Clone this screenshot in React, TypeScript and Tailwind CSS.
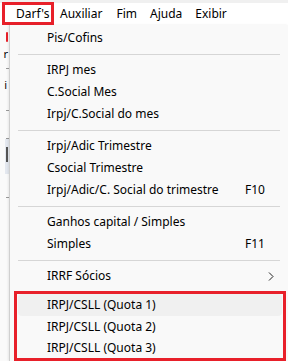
import React from 'react';

type Item = { label: string; key?: string; sub?: boolean };

const groups: Item[][] = [
  [{ label: 'Pis/Cofins' }],
  [{ label: 'IRPJ mes' }, { label: 'C.Social Mes' }, { label: 'Irpj/C.Social do mes' }],
  [
    { label: 'Irpj/Adic Trimestre' },
    { label: 'Csocial Trimestre' },
    { label: 'Irpj/Adic/C. Social do trimestre', key: 'F10' },
  ],
  [{ label: 'Ganhos capital / Simples' }, { label: 'Simples', key: 'F11' }],
];

const quotas = ['IRPJ/CSLL (Quota 1)', 'IRPJ/CSLL (Quota 2)', 'IRPJ/CSLL (Quota 3)'];

const Row = ({ item, h = 'h-[22px]' }: { item: Item; h?: string }) => (
  <div className={`flex ${h} items-center text-[12px] text-black`}>
    <span className="w-[198px]">{item.label}</span>
    <span className="w-[23px]">{item.key}</span>
    {item.sub && (
      <svg width="6" height="9" viewBox="0 0 6 9">
        <path d="M1 0.5 L5 4.5 L1 8.5" fill="none" stroke="#222" strokeWidth="1" />
      </svg>
    )}
  </div>
);

const Separator = () => (
  <div className="flex h-[10px] items-center px-[8px]">
    <div className="h-px w-full bg-[#d6d6d6]" />
  </div>
);

const App = () => {
  return (
    <div
      className="h-[361px] w-[288px] overflow-hidden bg-white"
      style={{ fontFamily: '"Noto Sans", "Open Sans", sans-serif' }}
    >
      {/* window strip + menu bar */}
      <div className="h-[3px] bg-[#f0f0f0]" />
      <div className="flex h-[22px] items-center text-[12px] text-black">
        <div className="-mt-px ml-[2px] flex h-[23px] w-[52px] items-center border-[3px] border-[#e8202a] pl-[11px]">
          Darf's
        </div>
        <span className="ml-[6px]">Auxiliar</span>
        <span className="ml-[14px]">Fim</span>
        <span className="ml-[13px]">Ajuda</span>
        <span className="ml-[13px]">Exibir</span>
      </div>

      <div className="flex h-[336px]">
        {/* bits of the window behind */}
        <div className="flex w-[9px] flex-col items-end bg-[#fafafa] pt-[7px] text-[11px] leading-none">
          <div className="mr-px h-[10px] w-[2px] rounded-sm bg-[#e8202a]" />
          <span className="mr-px mt-[6px]">r</span>
          <div className="mt-[9px] h-px w-[3px] bg-[#999]" />
          <span className="mr-[2px] mt-[10px]">i</span>
          <div className="mt-[20px] h-px w-[3px] bg-[#999]" />
          <div className="mt-[27px] h-px w-[3px] bg-[#999]" />
          <div className="flex h-[35px] w-[4px] items-start justify-center bg-[#e4e8ef] pt-[8px]">
            <div className="h-[15px] w-[2px] bg-[#555]" />
          </div>
          <div className="mt-[23px] h-px w-[3px] bg-[#999]" />
        </div>

        {/* dropdown */}
        <div className="flex-1 border-l border-[#d0d0d0] bg-[#f9f9f9] pt-[2px] shadow-[-1px_0_2px_rgba(0,0,0,0.08)]">
          {groups.map((g, i) => (
            <div key={i}>
              <div className="pl-[37px]">
                {g.map((it) => (
                  <Row key={it.label} item={it} />
                ))}
              </div>
              <Separator />
            </div>
          ))}
          <div className="pl-[37px]">
            <Row item={{ label: 'IRRF Sócios', sub: true }} />
          </div>

          <div className="ml-[4px] mr-[2px] mt-[4px] border-[3px] border-[#e8202a]">
            {quotas.map((q, i) => (
              <div key={q} className={`mx-px pl-[29px] ${i === 0 ? 'rounded-[4px] bg-[#f0f0f0]' : ''}`}>
                <Row item={{ label: q }} h={i === 2 ? 'h-[20px]' : 'h-[22px]'} />
              </div>
            ))}
          </div>
        </div>
      </div>
    </div>
  );
};

export default App;
